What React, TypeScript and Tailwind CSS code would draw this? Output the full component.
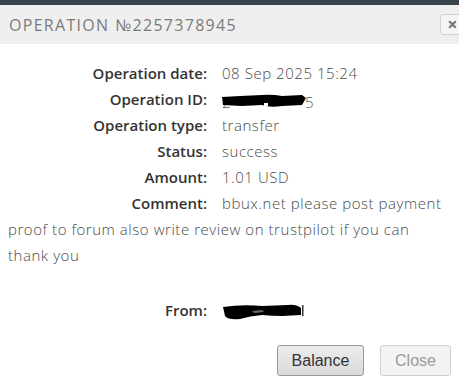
import { X } from 'lucide-react';

const rows = [
  { label: 'Operation date:', value: '08 Sep 2025 15:24' },
  { label: 'Operation ID:', value: 'id' },
  { label: 'Operation type:', value: 'transfer' },
  { label: 'Status:', value: 'success' },
  { label: 'Amount:', value: '1.01 USD' },
];

function Label({ text }: { text: string }) {
  return (
    <span className="inline-block w-[200px] pr-[1px] text-right font-semibold tracking-normal text-[#333] mr-[14px]">
      {text}
    </span>
  );
}

function IdScribble() {
  return (
    <span className="inline-flex items-center align-middle text-[#555]">
      <span className="relative inline-block w-[92px] h-[16px]">
        <span className="absolute left-0 top-[-4px]">2</span>
        <span className="absolute right-[0px] top-[-4px]">5</span>
        <svg viewBox="0 0 92 16" className="absolute inset-0 w-[92px] h-[16px]">
          <path d="M0 4 L18 3 L40 2 Q50 1 60 3 L80 2 L84 5 L80 12 L60 13 Q48 15 40 12 L20 13 L1 12 Z" fill="#000" />
          <rect x="42" y="10" width="4" height="3" fill="#fff" />
        </svg>
      </span>
    </span>
  );
}

function FromScribble() {
  return (
    <span className="inline-block align-middle">
      <svg viewBox="0 0 82 20" className="w-[82px] h-[20px]">
        <path d="M1 5 Q20 2 40 4 L66 3 Q74 2 79 6 L79 13 L60 14 Q50 14 40 13 Q28 14 18 17 Q6 18 3 14 Z" fill="#000" />
        <path d="M30 9 L40 8 L42 10 L32 11 Z" fill="#666" />
        <rect x="80" y="3" width="1.5" height="11" fill="#333" />
      </svg>
    </span>
  );
}

export default function App() {
  return (
    <div className="w-[459px] h-[381px] overflow-hidden bg-white" style={{ fontFamily: '"Open Sans", "Liberation Sans", sans-serif' }}>
      <div className="h-[5px] bg-[#36434b]" />
      <div className="h-[39px] bg-[#efefef] flex items-center justify-between pl-[9px] overflow-hidden">
        <div className="text-[16px] tracking-[1.3px] text-[#7b7b7b] pt-[1px]">OPERATION №2257378945</div>
        <button className="w-[24px] h-[21px] -mr-[5px] rounded-[3px] border border-[#d2d2d2] bg-[#f4f4f4] flex items-center justify-center">
          <X className="w-[11px] h-[11px] text-[#777]" strokeWidth={4.5} />
        </button>
      </div>
      <div className="px-[8px] pt-[16px] text-[15px] leading-[26px] text-[#4a4a4a] font-light tracking-[0.55px]">
        {rows.map((r) => (
          <div key={r.label}>
            <Label text={r.label} />
            {r.value === 'id' ? <IdScribble /> : r.value}
          </div>
        ))}
        <div>
          <Label text="Comment:" />
          bbux.net please post payment proof to forum also write review on trustpilot if you can thank you
        </div>
        <div className="mt-[29px]">
          <Label text="From:" />
          <FromScribble />
        </div>
        <div className="flex justify-end gap-[16px] mt-[22px] tracking-normal">
          <button className="w-[87px] h-[31px] rounded-[3px] border border-[#9a9a9a] bg-gradient-to-b from-[#ececec] to-[#dadada] text-[16px] font-normal text-[#333]" style={{ fontFamily: '"Liberation Sans", sans-serif' }}>
            Balance
          </button>
          <button className="w-[71px] h-[31px] rounded-[3px] border border-[#cfcfcf] bg-[#f3f3f3] text-[16px] font-normal text-[#9a9a9a]" style={{ fontFamily: '"Liberation Sans", sans-serif' }}>
            Close
          </button>
        </div>
      </div>
    </div>
  );
}
